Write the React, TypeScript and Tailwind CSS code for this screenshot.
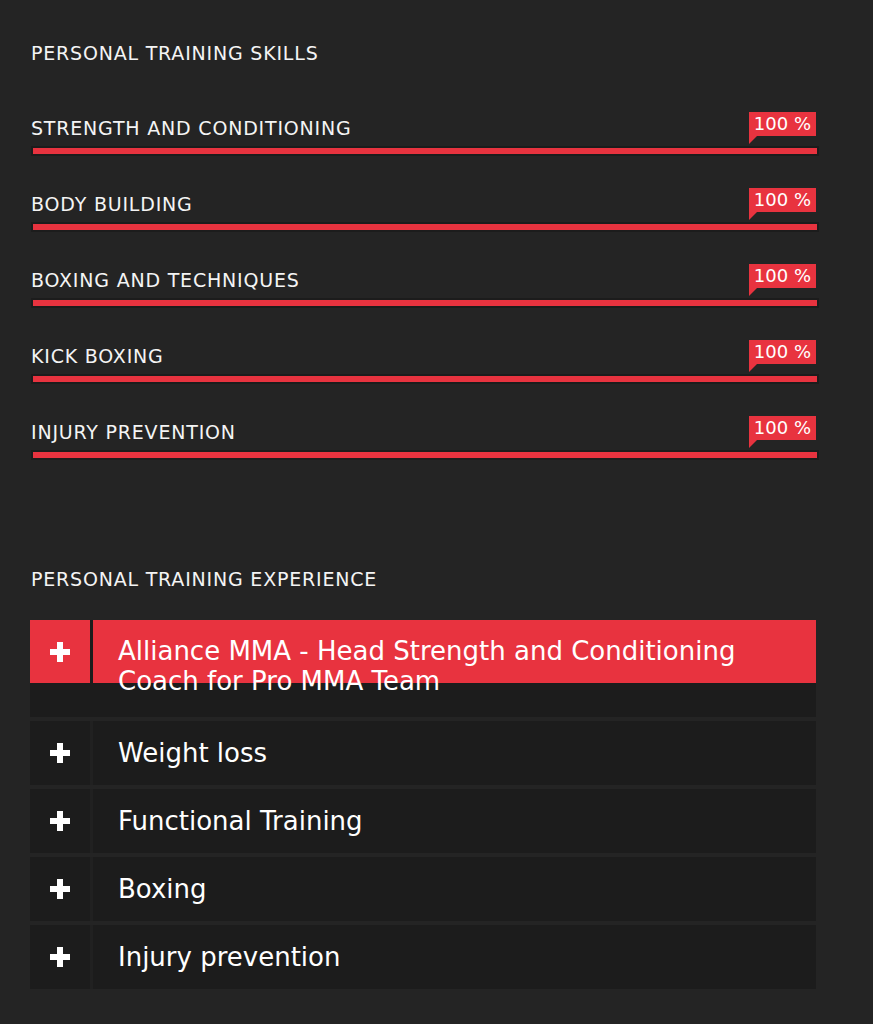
import React from "react";

type Skill = {
  name: string;
  percent: number;
};

const skills: Skill[] = [
  { name: "STRENGTH AND CONDITIONING", percent: 100 },
  { name: "BODY BUILDING", percent: 100 },
  { name: "BOXING AND TECHNIQUES", percent: 100 },
  { name: "KICK BOXING", percent: 100 },
  { name: "INJURY PREVENTION", percent: 100 },
];

const experience: string[] = [
  "Weight loss",
  "Functional Training",
  "Boxing",
  "Injury prevention",
];

const Plus = () => (
  <svg width="20" height="20" viewBox="0 0 20 20" className="block">
    <rect x="7" y="0" width="6" height="20" fill="#ffffff" />
    <rect x="0" y="7" width="20" height="6" fill="#ffffff" />
  </svg>
);

const SkillBar: React.FC<{ skill: Skill }> = ({ skill }) => (
  <div className="relative mb-[36px] w-[788px]">
    <div className="h-[24px] text-[19px] leading-[24px] tracking-[0.8px] text-[#f4f4f4]">
      {skill.name}
    </div>
    <div className="absolute right-[3px] top-[-4px]">
      <div className="bg-[#e8333f] px-[5px] h-[24px] text-[18px] leading-[24px] text-white">
        {skill.percent} %
      </div>
      <div className="w-0 h-0 border-t-[8px] border-t-[#e8333f] border-r-[8px] border-r-transparent" />
    </div>
    <div className="mt-[6px] h-[10px] bg-[#1c1c1c] p-[2px]">
      <div
        className="h-full bg-[#e8333f]"
        style={{ width: `${skill.percent}%` }}
      />
    </div>
  </div>
);

export default function App() {
  return (
    <div
      className="min-h-screen bg-[#242424] pl-[31px] pt-[41px] pb-[35px]"
      style={{ fontFamily: '"DejaVu Sans", sans-serif' }}
    >
      <h3 className="h-[24px] text-[19px] leading-[24px] tracking-[0.8px] text-[#f4f4f4] mb-[51px]">
        PERSONAL TRAINING SKILLS
      </h3>

      {skills.map((s) => (
        <SkillBar key={s.name} skill={s} />
      ))}

      <h3 className="mt-[107px] h-[24px] text-[19px] leading-[24px] tracking-[0.8px] text-[#f4f4f4] mb-[29px]">
        PERSONAL TRAINING EXPERIENCE
      </h3>

      <div className="-ml-[1px] w-[786px] flex flex-col gap-[4px]">
        <div className="bg-[#1c1c1c] h-[97px]">
          <div className="flex gap-[3px] h-[63px]">
            <div className="w-[60px] bg-[#e8333f] flex items-center justify-center">
              <Plus />
            </div>
            <div className="flex-1 bg-[#e8333f] pl-[25px] pr-[25px] pt-[16px] text-[26px] leading-[30px] text-white">
              Alliance MMA - Head Strength and Conditioning Coach for Pro MMA Team
            </div>
          </div>
        </div>

        {experience.map((title) => (
          <div key={title} className="flex gap-[3px] h-[64px] bg-[#212121]">
            <div className="w-[60px] bg-[#1c1c1c] flex items-center justify-center">
              <Plus />
            </div>
            <div className="flex-1 bg-[#1c1c1c] pl-[25px] flex items-center text-[26px] leading-[30px] text-white">
              {title}
            </div>
          </div>
        ))}
      </div>
    </div>
  );
}
